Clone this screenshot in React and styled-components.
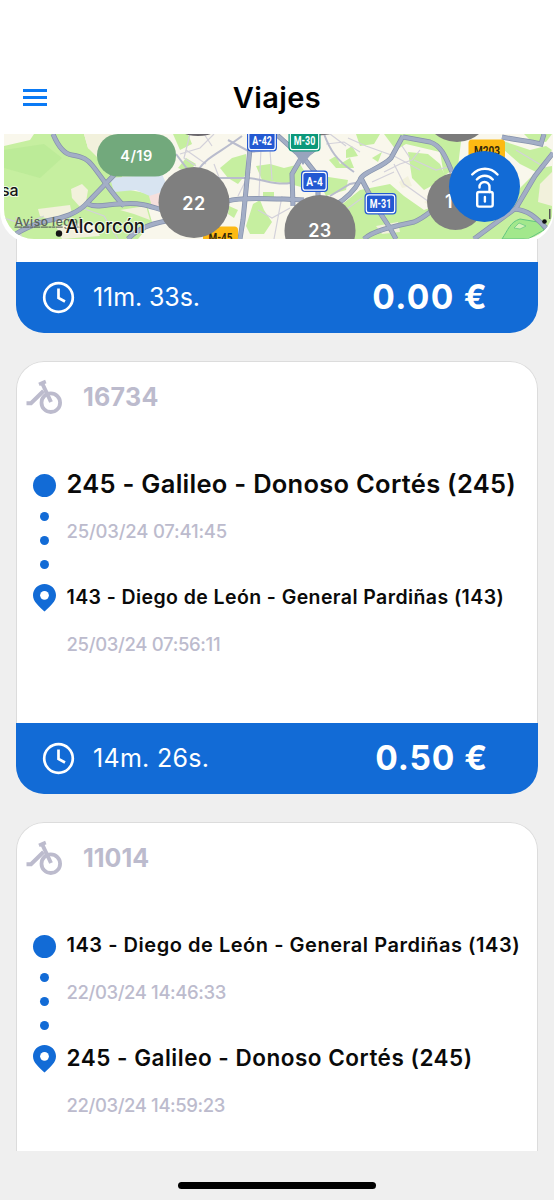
import React from "react";
import styled, { createGlobalStyle } from "styled-components";

const trips = [
  {
    id: 1,
    time: "11m. 33s.",
    timeSpacing: -0.1,
    price: "0.00 €",
    priceSpacing: 1.3
  },
  {
    id: 2,
    bike: "16734",
    bikeSpacing: 0.3,
    from: {
      name: "245 - Galileo - Donoso Cortés (245)",
      size: 25.5,
      spacing: 0.27,
      date: "25/03/24 07:41:45",
      dateSpacing: -0.2
    },
    to: {
      name: "143 - Diego de León - General Pardiñas (143)",
      size: 19.5,
      spacing: 0.41,
      date: "25/03/24 07:56:11",
      dateSpacing: -0.33
    },
    time: "14m. 26s.",
    timeSpacing: 0.3,
    price: "0.50 €",
    priceSpacing: 0.9
  },
  {
    id: 3,
    bike: "11014",
    bikeSpacing: 0,
    from: {
      name: "143 - Diego de León - General Pardiñas (143)",
      size: 20,
      spacing: 0.53,
      date: "22/03/24 14:46:33",
      dateSpacing: -0.4
    },
    to: {
      name: "245 - Galileo - Donoso Cortés (245)",
      size: 22.5,
      spacing: 0.51,
      date: "22/03/24 14:59:23",
      dateSpacing: -0.4
    },
    time: "12m. 50s.",
    timeSpacing: 0.3,
    price: "0.50 €",
    priceSpacing: 0.9
  }
];

const greens = [
  "M4 146L30 140L34 134H84L88 148L100 156L118 170L130 190L150 194L158 202L148 208L152 222L138 239H4Z",
  "M173 134H188L192 144L180 150Z",
  "M178 168L186 158L196 164L188 172Z",
  "M220 168L232 158L246 154L246 174L238 184L228 178Z",
  "M256 166L270 164L284 168L300 164L306 174L318 182L312 190L290 184L262 180Z",
  "M229 206L238 210L234 218L228 214Z",
  "M263 192H274V197H263Z",
  "M253 204L260 200L264 210L272 222L264 234L250 234L246 226Z",
  "M322 176L348 180L346 190L326 196L322 188Z",
  "M346 150L352 146L358 156L346 158Z",
  "M329 160L336 156L340 164L350 158L354 168L336 168Z",
  "M356 134H380L374 144L360 146Z",
  "M384 134H462L458 166L444 176L440 152L406 144L396 150Z",
  "M408 152L428 154L440 164L446 178L424 190L412 178Z",
  "M340 206L360 190L390 184L404 196L424 210L440 204L470 226L446 239H344Z",
  "M372 158L382 152L378 162Z",
  "M440 200L500 212L516 192L540 168L552 166V239H420Z",
  "M500 140L530 150L546 146L552 150L536 172L520 164L504 150Z",
  "M524 134H552L546 142L530 140Z"
];

const fields = [
  "M71 189L82 184L88 190L86 202L80 207L72 198Z",
  "M399 182L408 176L412 186L402 188Z",
  "M84 134H112L98 158L88 148Z",
  "M38 209L70 205L72 214L60 224L40 216Z",
  "M120 210L146 206L150 220L134 214Z",
  "M56 226L92 222L100 236L62 239Z",
  "M376 226L398 222L400 232L382 234Z",
  "M540 184L552 172V206L538 202Z",
  "M424 202L440 194L446 204L430 206Z"
];

const minorRoads = [
  "M180 154L200 148L214 134M190 134L184 158L196 166",
  "M186 150L206 164M204 134L212 146",
  "M4 218L24 224L44 216M16 217L22 239",
  "M82 208L104 216L118 239",
  "M214 164L226 196M250 172L238 196M261 148L259 196M270 150L272 180",
  "M258 210L272 218L290 208M282 196L274 239",
  "M326 144L344 142L360 152M330 134L346 146",
  "M348 138L366 146L394 156L420 170",
  "M384 172L400 164L412 160L420 150M372 182L394 172",
  "M394 164L404 184L432 204M410 158L402 146",
  "M414 160L436 170L452 166M340 214L362 198",
  "M516 150L546 168M470 140L500 148"
];

const midRoads = [
  "M198 170C208 156 218 154 242 136",
  "M218 178L246 178C262 178 274 186 290 183",
  "M176 154L188 170",
  "M228 140L250 152L270 150",
  "M324 134C330 150 336 160 354 172",
  "M330 196L350 184L360 182"
];

const mainRoads = [
  "M53 134C58 146 64 154 72 155C84 157 88 160 92 165C104 180 112 194 124 206",
  "M116 173L88 202C78 214 62 218 46 221C34 224 22 230 14 235",
  "M88 204C98 209 110 203 122 204C138 202 150 206 162 210",
  "M166 221C150 224 136 230 128 239",
  "M228 201C240 197 262 199 284 199L304 200",
  "M250 148L246 190L243 220L240 239",
  "M276 134L296 152L304 157L316 148",
  "M303 155L292 174L293 206",
  "M303 157L318 176V198",
  "M403 136L391 158C382 168 362 172 360 180C354 192 344 200 334 206",
  "M403 137L430 142C442 146 446 158 452 172",
  "M361 178L375 205L390 228L396 239",
  "M364 239C374 230 396 226 414 222C428 216 432 208 444 204",
  "M553 153L535 176L516 208L474 239",
  "M514 209C530 210 538 220 548 230",
  "M502 137C516 140 530 141 541 144L544 134"
];

const shields = [
  { text: "A-42", x: 247, y: 130, w: 30, h: 21.5, fill: "#2359d2" },
  { text: "M-30", x: 288.5, y: 130, w: 32, h: 21.5, fill: "#0c987a" },
  { text: "A-4", x: 301, y: 170.5, w: 27, h: 21.5, fill: "#2359d2" },
  { text: "M-31", x: 364.5, y: 193, w: 32, h: 21.5, fill: "#2359d2" }
];

function Shield({ text, x, y, w, h, fill }) {
  return (
    <g>
      <rect x={x} y={y} width={w} height={h} rx="4" fill={fill} />
      <rect
        x={x + 1.8}
        y={y + 1.8}
        width={w - 3.6}
        height={h - 3.6}
        rx="2.8"
        fill="none"
        stroke="#fff"
        strokeWidth="1.2"
      />
      <ShieldText
        x={x + w / 2}
        y={y + h / 2 + 4.3}
        textLength={w - 10.5}
        lengthAdjust="spacingAndGlyphs"
      >
        {text}
      </ShieldText>
    </g>
  );
}

function CityMap() {
  return (
    <MapSvg viewBox="4 134 549 105" preserveAspectRatio="none">
      <rect x="4" y="134" width="549" height="105" fill="#f9f7ec" />
      {greens.map(d => (
        <path key={d} d={d} fill="#c6efa0" />
      ))}
      <path d="M4 150L44 144L62 158L40 178L4 168Z" fill="#b6e792" opacity=".6" />
      <path d="M110 178L162 174L168 188L152 197L136 190L114 192Z" fill="#d8e4f1" />
      <path d="M149 196L162 192V207H152Z" fill="#f6dfdc" />
      {fields.map(d => (
        <path key={d} d={d} fill="#f2f1dc" />
      ))}
      <path
        d="M502 239C508 230 510 222 520 219L538 222L544 230L528 239Z"
        fill="#a2e88c"
        stroke="#62c482"
        strokeWidth="1"
      />
      <path d="M514 228L519 223L526 226L520 229Z" fill="#d4f2b8" stroke="#62c482" strokeWidth=".7" />
      {minorRoads.map(d => (
        <path key={d} d={d} fill="none" stroke="#d3d1da" strokeWidth="1.2" />
      ))}
      {midRoads.map(d => (
        <path key={d} d={d} fill="none" stroke="#b9bccd" strokeWidth="2" />
      ))}
      {mainRoads.map(d => (
        <path key={d} d={d} fill="none" stroke="#8591ab" strokeWidth="5" />
      ))}
      {mainRoads.map(d => (
        <path key={d} d={d} fill="none" stroke="#a3aec6" strokeWidth="3.6" />
      ))}
      <path d="M292 150L314 150L303 165Z" fill="#98a4bd" />

      <ellipse cx="198" cy="122" rx="25" ry="14" fill="#69666b" />
      <ellipse cx="315" cy="121" rx="35" ry="14.5" fill="#747274" />
      <ellipse cx="457" cy="106" rx="35" ry="36" fill="#7b7b7b" />

      {shields.map(shield => (
        <Shield key={shield.text} {...shield} />
      ))}
      <rect x="203" y="226.5" width="35" height="18" rx="3.5" fill="#fdb913" />
      <RoadText x="220.5" y="241.5" textLength="24" lengthAdjust="spacingAndGlyphs">
        M-45
      </RoadText>
      <rect x="468.5" y="139.5" width="36.5" height="20" rx="3.5" fill="#fdb913" />
      <RoadText x="487" y="154.500" textLength="26" lengthAdjust="spacingAndGlyphs">
        M203
      </RoadText>

      <rect x="97" y="134" width="79" height="42.5" rx="21" fill="#72a97c" />
      <MarkerText x="136.5" y="160.5" $size={14.5}>
        4/19
      </MarkerText>
      <circle cx="194" cy="202.5" r="35.5" fill="#7f7f7f" />
      <MarkerText x="194" y="209.5" $size={18}>
        22
      </MarkerText>
      <circle cx="320" cy="230.5" r="35.5" fill="#7f7f7f" />
      <MarkerText x="320" y="236.5" $size={18}>
        23
      </MarkerText>
      <circle cx="455.5" cy="201.5" r="28.5" fill="#7f7f7f" />
      <MarkerText x="449" y="208" $size={18}>
        1
      </MarkerText>

      <PlaceText x="1" y="196" $size={16}>
        sa
      </PlaceText>
      <LegalText x="14.5" y="225.5" textLength="67">
        Aviso legal
      </LegalText>
      <circle cx="59" cy="233.5" r="3.2" fill="#151515" />
      <PlaceText x="65.5" y="232.5" $size={18.5} textLength="79.5">
        Alcorcón
      </PlaceText>
      <circle cx="544.5" cy="221.5" r="2.3" fill="#111" />
      <rect x="549" y="209" width="1.500" height="10" fill="#555" />
    </MapSvg>
  );
}

function UnlockIcon() {
  return (
    <svg width="30" height="44" viewBox="0 0 30 44" fill="none" stroke="#fff" strokeWidth="2.400" strokeLinecap="round">
      <path d="M2.200 9.500C9.500 1.800 20.500 1.800 27.500 9.500" />
      <path d="M6.800 14.500C11.500 9.500 18 9.500 22.800 14.500" />
      <path d="M9.500 22.500V22A5 5 0 0 1 19.500 22V27" />
      <rect x="7.200" y="27" width="15.500" height="14.600" rx="1.800" />
      <path d="M14.900 32V36.500" />
    </svg>
  );
}

function BikeIcon() {
  return (
    <svg width="38" height="36" viewBox="0 0 38 36" fill="none" stroke="#bcbbcd">
      <circle cx="24.800" cy="23.700" r="9.300" strokeWidth="3.800" />
      <path d="M.5 24.200H5L17.500 12" strokeWidth="4" />
      <path d="M15.800 3.500L25 23" strokeWidth="4" />
      <path d="M13 5.300L19.800 2.500" strokeWidth="3.600" />
    </svg>
  );
}

function ClockIcon() {
  return (
    <svg width="33" height="33" viewBox="0 0 33 33" fill="none" stroke="#fff">
      <circle cx="16.500" cy="16.500" r="14.300" strokeWidth="2.700" />
      <path d="M16.500 7.500V17L23 20.500" strokeWidth="2.700" />
    </svg>
  );
}

function PinIcon() {
  return (
    <svg width="23" height="28" viewBox="0 0 23 28">
      <path
        d="M11.500 0C5 0 0 5 0 11.300C0 17.500 5.500 22 11.500 27.500C17.500 22 23 17.500 23 11.300C23 5 18 0 11.500 0Z"
        fill="#126bd6"
      />
      <circle cx="11.500" cy="11.300" r="4.400" fill="#fff" />
    </svg>
  );
}

function Trip({ trip }) {
  return (
    <Card $cut={!trip.bike}>
      {trip.bike ? (
        <>
          <BikeRow>
            <BikeIcon />
            <BikeNumber $spacing={trip.bikeSpacing}>{trip.bike}</BikeNumber>
          </BikeRow>
          <Route>
            <Rail>
              <StartDot />
              <SmallDot />
              <SmallDot />
              <SmallDot />
              <PinIcon />
            </Rail>
            <Stops>
              {[trip.from, trip.to].map(stop => (
                <Stop key={stop.date}>
                  <StopName $size={stop.size} $spacing={stop.spacing}>
                    {stop.name}
                  </StopName>
                  <StopDate $spacing={stop.dateSpacing}>{stop.date}</StopDate>
                </Stop>
              ))}
            </Stops>
          </Route>
        </>
      ) : null}
      <CardFooter>
        <ClockIcon />
        <Duration $spacing={trip.timeSpacing}>{trip.time}</Duration>
        <Price $spacing={trip.priceSpacing}>{trip.price}</Price>
      </CardFooter>
    </Card>
  );
}

export default function App() {
  return (
    <Screen>
      <GlobalStyle />
      <TopPanel>
        <TitleBar>
          <MenuButton aria-label="Menu">
            <span />
            <span />
            <span />
          </MenuButton>
          <Title>Viajes</Title>
        </TitleBar>
        <MapBox>
          <CityMap />
          <UnlockButton aria-label="Unlock">
            <UnlockIcon />
          </UnlockButton>
        </MapBox>
      </TopPanel>
      <TripList>
        {trips.map(trip => (
          <Trip key={trip.id} trip={trip} />
        ))}
      </TripList>
      <BottomBar>
        <HomeIndicator />
      </BottomBar>
    </Screen>
  );
}

const GlobalStyle = createGlobalStyle`
  * {
    box-sizing: border-box;
  }
  body {
    margin: 0;
    background: #efefef;
    font-family: Inter, "Liberation Sans", sans-serif;
  }
`;

const Screen = styled.div`
  display: flex;
  flex-direction: column;
  width: 554px;
  height: 1200px;
  overflow: hidden;
  background: #efefef;
`;

const TopPanel = styled.header`
  position: relative;
  z-index: 1;
  flex: none;
  height: 243px;
  padding-top: 60px;
  background: #fff;
  border-radius: 0 0 32px 32px;
`;

const TitleBar = styled.div`
  display: grid;
  grid-template-columns: 70px 1fr 70px;
  align-items: center;
  height: 74px;
`;

const MenuButton = styled.button`
  display: flex;
  flex-direction: column;
  gap: 4px;
  width: 24px;
  margin-left: 23px;
  padding: 0;
  border: none;
  background: none;
  span {
    height: 3px;
    background: #0a7af5;
  }
`;

const Title = styled.h1`
  margin: 0;
  text-align: center;
  font-size: 29px;
  font-weight: 600;
  letter-spacing: 0.4px;
`;

const MapBox = styled.div`
  position: relative;
  height: 105px;
  margin: 0 1px 0 4px;
  border-radius: 0 0 30px 30px;
  overflow: hidden;
`;

const MapSvg = styled.svg`
  display: block;
  width: 100%;
  height: 100%;
`;

const ShieldText = styled.text`
  fill: #fff;
  font-family: Roboto, sans-serif;
  font-size: 12px;
  font-weight: 700;
  text-anchor: middle;
`;

const RoadText = styled(ShieldText)`
  fill: #33270a;
`;

const MarkerText = styled.text`
  fill: #fff;
  font-size: ${props => props.$size}px;
  font-weight: 600;
  letter-spacing: 0.5px;
  text-anchor: middle;
`;

const PlaceText = styled.text`
  fill: #151515;
  stroke: rgba(255, 255, 255, 0.7);
  stroke-width: 2px;
  paint-order: stroke;
  font-size: ${props => props.$size}px;
  font-weight: 500;
`;

const LegalText = styled.text`
  fill: #59635a;
  font-size: 12px;
  font-weight: 500;
  text-decoration: underline;
`;

const UnlockButton = styled.button`
  position: absolute;
  top: 17px;
  right: 33px;
  display: flex;
  align-items: center;
  justify-content: center;
  width: 71px;
  height: 71px;
  padding: 0;
  border: none;
  border-radius: 50%;
  background: #126bd6;
`;

const TripList = styled.main`
  display: flex;
  flex: 1;
  flex-direction: column;
  gap: 28px;
  min-height: 0;
  margin-top: -32px;
  padding: 0 16px;
  overflow: hidden;
`;

const Card = styled.article`
  display: flex;
  flex: none;
  flex-direction: column;
  height: ${props => (props.$cut ? "121.5px" : "433px")};
  border-radius: ${props => (props.$cut ? "0 0 28px 28px" : "28px")};
  background: #fff;
  box-shadow: inset 0 0 0 1px #dcdcdc;
  overflow: hidden;
`;

const BikeRow = styled.div`
  display: flex;
  align-items: center;
  gap: 19px;
  height: 36px;
  margin: 18px 0 0 10px;
`;

const BikeNumber = styled.span`
  color: #bcbbcd;
  font-size: 25px;
  font-weight: 700;
  letter-spacing: ${props => props.$spacing}px;
`;

const Route = styled.div`
  display: flex;
  gap: 11px;
  margin: 59px 0 0 16.5px;
`;

const Rail = styled.div`
  display: flex;
  flex-direction: column;
  align-items: center;
  gap: 15px;
  width: 23px;
  svg {
    flex: none;
  }
`;

const StartDot = styled.div`
  width: 23px;
  height: 23px;
  border-radius: 50%;
  background: #126bd6;
`;

const SmallDot = styled.div`
  width: 9px;
  height: 9px;
  border-radius: 50%;
  background: #126bd6;
`;

const Stops = styled.div`
  display: flex;
  flex-direction: column;
  gap: 39px;
  margin-top: -5px;
`;

const Stop = styled.div`
  display: flex;
  flex-direction: column;
  gap: 20px;
`;

const StopName = styled.div`
  color: #0a0a0a;
  font-size: ${props => props.$size}px;
  font-weight: 600;
  line-height: 30px;
  letter-spacing: ${props => props.$spacing}px;
  white-space: nowrap;
`;

const StopDate = styled.div`
  color: #bcbbcd;
  font-size: 18.5px;
  font-weight: 500;
  line-height: 24px;
  letter-spacing: ${props => props.$spacing}px;
  white-space: nowrap;
`;

const CardFooter = styled.footer`
  display: flex;
  align-items: center;
  height: 71px;
  margin-top: auto;
  padding: 0 50px 0 26px;
  background: #126bd6;
  color: #fff;
`;

const Duration = styled.span`
  margin-left: 18px;
  font-size: 25px;
  letter-spacing: ${props => props.$spacing}px;
`;

const Price = styled.strong`
  margin-left: auto;
  font-size: 33.5px;
  font-weight: 700;
  line-height: 40px;
  letter-spacing: ${props => props.$spacing}px;
`;

const BottomBar = styled.div`
  display: flex;
  flex: none;
  justify-content: center;
  height: 49px;
  padding-top: 30.5px;
`;

const HomeIndicator = styled.div`
  width: 198px;
  height: 7px;
  border-radius: 4px;
  background: #000;
`;
